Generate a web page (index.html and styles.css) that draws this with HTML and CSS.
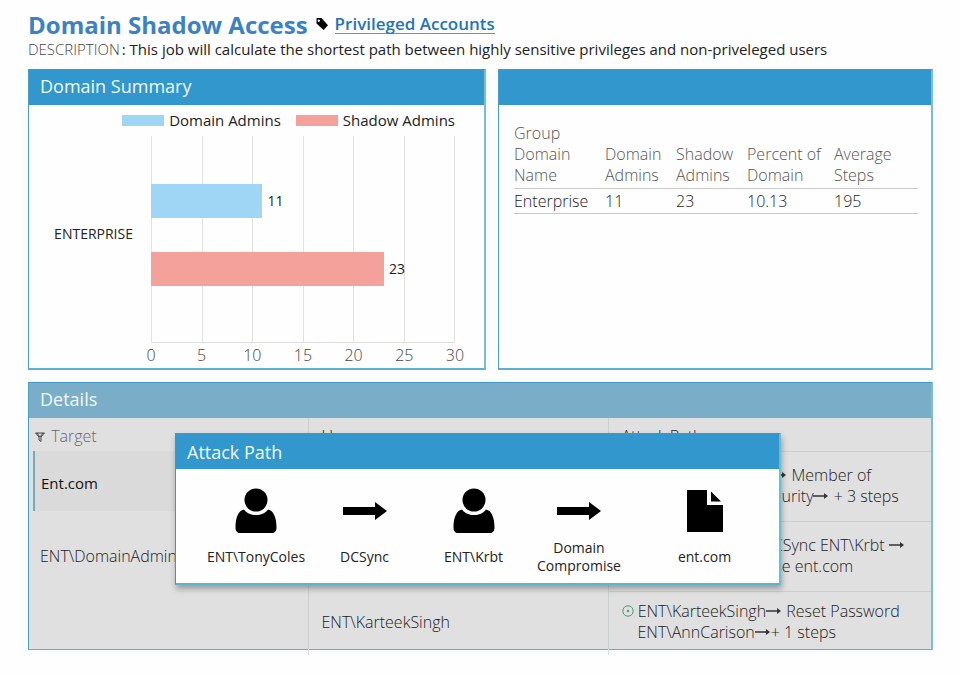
FILE: index.html
```html
<!DOCTYPE html>
<html lang="en">
<head>
    <meta charset="UTF-8">
    <meta name="viewport" content="width=device-width, initial-scale=1.0">
    <title>Domain Shadow Access</title>
    <link rel="stylesheet" href="styles.css">
</head>
<body>
    <svg width="0" height="0" class="sprite">
        <symbol id="person" viewBox="0 0 42 46">
            <path d="M9 21.500C12 25.500 16 27 21 27s9-1.500 12-5.500c5.500 1 8.500 8 8.500 18 0 3.500-1.500 5.500-5 5.500h-31c-3.500 0-5-2-5-5.500 0-10 3-17 8.500-18z"/>
            <circle cx="21" cy="12" r="11.500"/>
        </symbol>
        <symbol id="arrow" viewBox="0 0 46 20">
            <path d="M1 6h32V1l12 9-12 9v-5H1z"/>
        </symbol>
        <symbol id="file" viewBox="0 0 36 42">
            <path d="M0 0h20v15h16v27H0z"/>
            <path d="M24 1.500v10h10z"/>
        </symbol>
        <symbol id="step" viewBox="0 0 16 8">
            <path d="M0 4h12" stroke="currentColor" stroke-width="1.500"/>
            <path d="M11 1l4 3-4 3z" fill="currentColor"/>
        </symbol>
    </svg>

    <header class="page-header">
        <div class="title-row">
            <h1>Domain Shadow Access</h1>
            <svg class="tag-icon" viewBox="0 0 12 12"><path fill-rule="evenodd" d="M1 0h4.500L12 7.200 7.600 12 .5 5.500V.5zM2.800 1.500a1.200 1.200 0 1 0 .01 0z"/></svg>
            <a href="#">Privileged Accounts</a>
        </div>
        <p class="description"><span>DESCRIPTION</span>: This job will calculate the shortest path between highly sensitive privileges and non-priveleged users</p>
    </header>

    <main>
        <div class="top-panels">
            <section class="panel">
                <h2>Domain Summary</h2>
                <div class="chart">
                    <div class="legend">
                        <span><i class="domain"></i>Domain Admins</span>
                        <span><i class="shadow"></i>Shadow Admins</span>
                    </div>
                    <div class="category">ENTERPRISE</div>
                    <div class="grid-lines">
                        <i></i><i></i><i></i><i></i><i></i><i></i>
                    </div>
                    <div class="bars">
                        <div class="bar-row"><div class="bar domain" style="width: 36.667%"></div>11</div>
                        <div class="bar-row"><div class="bar shadow" style="width: 76.667%"></div>23</div>
                    </div>
                    <div class="axis">
                        <span>0</span><span>5</span><span>10</span><span>15</span><span>20</span><span>25</span><span>30</span>
                    </div>
                </div>
            </section>

            <section class="panel">
                <h2></h2>
                <table class="summary">
                    <thead>
                        <tr>
                            <th>Group<br>Domain<br>Name</th>
                            <th>Domain<br>Admins</th>
                            <th>Shadow<br>Admins</th>
                            <th>Percent of<br>Domain</th>
                            <th>Average<br>Steps</th>
                        </tr>
                    </thead>
                    <tbody>
                        <tr>
                            <td>Enterprise</td>
                            <td>11</td>
                            <td>23</td>
                            <td>10.13</td>
                            <td>195</td>
                        </tr>
                    </tbody>
                </table>
            </section>
        </div>

        <section class="panel details">
            <h2>Details</h2>
            <table class="paths">
                <thead>
                    <tr>
                        <th>
                            <svg class="filter-icon" viewBox="0 0 10 10"><path d="M.5 1h9L6 5v4.500L4 8V5zM2 1l3 4 3-4"/></svg>
                            Target
                        </th>
                        <th>User</th>
                        <th>Attack Path</th>
                    </tr>
                </thead>
                <tbody>
                    <tr>
                        <td class="selected"><div>Ent.com</div></td>
                        <td></td>
                        <td>
                            <div class="steps">ENT\RobertBrown <svg class="step"><use href="#step"/></svg> Member of<br>
                            ENT\Operations Security<svg class="step"><use href="#step"/></svg> + 3 steps</div>
                        </td>
                    </tr>
                    <tr>
                        <td>ENT\DomainAdmins</td>
                        <td></td>
                        <td>
                            <div class="steps">ENT\TonyColes<svg class="step"><use href="#step"/></svg>DCSync ENT\Krbt <svg class="step"><use href="#step"/></svg><br>
                            Domain Compromise ent.com</div>
                        </td>
                    </tr>
                    <tr>
                        <td></td>
                        <td>ENT\KarteekSingh</td>
                        <td>
                            <div class="steps">
                                <svg class="target-icon" viewBox="0 0 12 12"><circle cx="6" cy="6" r="5.200"/><circle class="dot" cx="6" cy="6" r="1.200"/></svg>
                                ENT\KarteekSingh<svg class="step"><use href="#step"/></svg> Reset Password<br>
                                ENT\AnnCarison<svg class="step"><use href="#step"/></svg>+ 1 steps
                            </div>
                        </td>
                    </tr>
                </tbody>
            </table>

            <div class="popup" role="dialog" aria-label="Attack Path">
                <h2>Attack Path</h2>
                <ol>
                    <li><svg class="person"><use href="#person"/></svg><span>ENT\TonyColes</span></li>
                    <li><svg class="arrow"><use href="#arrow"/></svg><span>DCSync</span></li>
                    <li><svg class="person"><use href="#person"/></svg><span>ENT\Krbt</span></li>
                    <li><svg class="arrow"><use href="#arrow"/></svg><span>Domain<br>Compromise</span></li>
                    <li><svg class="file"><use href="#file"/></svg><span>ent.com</span></li>
                </ol>
            </div>
        </section>
    </main>
</body>
</html>
```

FILE: styles.css
```css
* {
    box-sizing: border-box;
}
body {
    font-family: 'Open Sans', 'Noto Sans', sans-serif;
    background-color: #fefefe;
    margin: 0;
    padding: 8px 28px 20px;
    color: #222;
    font-size: 15px;
}
h1, h2, p, ol {
    margin: 0;
    padding: 0;
}
.sprite {
    position: absolute;
}

/* Page header */
.title-row {
    display: flex;
    align-items: center;
    height: 32px;
}
h1 {
    color: #3a82c4;
    font-size: 24px;
    font-weight: 700;
}
.tag-icon {
    width: 12px;
    height: 12px;
    margin: 0 7px 0 8px;
}
.title-row a {
    color: #2474b5;
    font-size: 17px;
    font-weight: 600;
    text-decoration: none;
    line-height: 18px;
    border-bottom: 1px solid #6f8fc4;
}
.description {
    font-size: 15px;
    line-height: 18px;
    margin-bottom: 11px;
}
.description span {
    font-weight: 300;
    font-size: 15px;
    margin-right: 2px;
    color: #444;
}

/* Panels */
.top-panels {
    display: grid;
    grid-template-columns: 458fr 435fr;
    gap: 12px;
    margin-bottom: 12px;
}
.panel {
    border: 1px solid;
    border-right-width: 2px;
    border-bottom-width: 2px;
    border-color: #3f98c8 #7dbdd3 #5fb0cf #4a9dc5;
    background-color: #fefefe;
    box-shadow: 0 0 8px rgba(90,150,200,0.08);
}
.panel h2 {
    height: 35px;
    padding-left: 11px;
    background-color: #3197cc;
    color: #f2f9fd;
    font-size: 18px;
    font-weight: 400;
    line-height: 33px;
}

/* Bar chart */
.chart {
    display: grid;
    grid-template-columns: 104px 1fr;
    grid-template-rows: 31px 207px 25px;
    column-gap: 18px;
    padding-right: 29px;
}
.legend {
    grid-column: 1 / 3;
    display: flex;
    justify-content: flex-end;
    gap: 15px;
    line-height: 31px;
    font-size: 15px;
}
.legend i {
    display: inline-block;
    width: 42px;
    height: 11px;
    margin-right: 5px;
}
.domain {
    background-color: #a0d6f5;
}
.shadow {
    background-color: #f4a09b;
}
.category {
    grid-row: 2;
    align-self: center;
    padding-bottom: 12px;
    text-align: right;
    font-size: 14px;
}
.grid-lines, .bars {
    grid-row: 2;
    grid-column: 2;
}
.grid-lines {
    display: flex;
    border-bottom: 1px solid #ddd;
}
.grid-lines i {
    flex: 1;
    border-left: 1px solid #e2e2e2;
}
.grid-lines i:last-child {
    border-right: 1px solid #e2e2e2;
}
.bars {
    display: flex;
    flex-direction: column;
    justify-content: center;
    gap: 34px;
    padding-bottom: 10px;
}
.bar-row {
    display: flex;
    align-items: center;
    gap: 5px;
    font-size: 14px;
    line-height: 34px;
}
.bar {
    height: 34px;
}
.axis {
    grid-column: 2;
    display: flex;
    justify-content: space-between;
    margin: 0 -15px;
    font-size: 16px;
    font-weight: 300;
    color: #444;
    line-height: 24px;
}
.axis span {
    width: 30px;
    text-align: center;
}

/* Tables */
table {
    border-collapse: collapse;
    font-size: 16px;
}
th, td {
    padding: 0;
    font-weight: 300;
    text-align: left;
    color: #222;
}
.summary {
    width: calc(100% - 28px);
    margin: 18px 13px 0 15px;
}
.summary th {
    color: #555;
    line-height: 21px;
    padding-bottom: 2px;
    vertical-align: bottom;
}
.summary th:nth-child(1) {
    width: 91px;
}
.summary th:nth-child(2), .summary th:nth-child(3) {
    width: 71px;
}
.summary th:nth-child(4) {
    width: 87px;
}
.summary tr {
    border-bottom: 1px solid #c9c9c9;
}
.summary td {
    height: 25px;
    line-height: 22px;
}
.details {
    position: relative;
    border-bottom-width: 1px;
    background-color: #e0e0e0;
}
.details > h2 {
    background-color: #7aaec8;
}
.paths {
    width: 100%;
    table-layout: fixed;
}
.paths th:nth-child(1) {
    width: 279px;
    padding-left: 6px;
    color: #667;
}
.paths th:nth-child(2) {
    width: 300px;
}
.paths th {
    height: 33px;
    padding-top: 3px;
}
.paths tbody tr {
    height: 70px;
}
.paths tbody tr:last-child {
    height: 58px;
}
.paths td:nth-child(1) {
    padding-left: 11px;
}
.paths th:nth-child(n+2), .paths td:nth-child(n+2) {
    border-left: 1px solid #cbcfd0;
    padding-left: 13px;
}
.paths td:nth-child(3) {
    border-top: 1px solid #cbcfd0;
}
.paths td.selected {
    padding: 0 0 0 4px;
    vertical-align: top;
}
.selected div {
    height: 60px;
    padding-left: 6px;
    border-left: 2px solid #78a9b8;
    background-color: #dadada;
    color: #111;
    font-size: 15px;
    font-weight: 400;
    line-height: 65px;
}
/* column rules run a little past the panel */
.paths tr:last-child td {
    position: relative;
    padding-top: 3px;
}
.paths tr:last-child td:nth-child(n+2)::after {
    content: "";
    position: absolute;
    top: 100%;
    left: -1px;
    height: 6px;
    border-left: 1px solid #dfe2e3;
}
.steps {
    padding-left: 16px;
    line-height: 21px;
    white-space: nowrap;
}
.filter-icon {
    width: 10px;
    height: 10px;
    margin-right: 2px;
    fill: none;
    stroke: #444;
}
.target-icon {
    width: 12px;
    height: 12px;
    margin-left: -16px;
    fill: none;
    stroke: #4f9a72;
}
.target-icon .dot {
    fill: #4f9a72;
    stroke: none;
}
.step {
    width: 16px;
    height: 8px;
    color: #333;
    vertical-align: 2px;
}

/* Attack path popup */
.popup {
    position: absolute;
    top: 50px;
    left: 146px;
    right: 150px;
    border: 1px solid #3a98c2;
    border-right: 2px solid #6cbcd4;
    border-bottom: 2px solid #5fb4cc;
    background-color: #fefefe;
    box-shadow: 1px 4px 6px rgba(0,0,0,0.3);
}
.popup h2 {
    line-height: 36px;
}
.popup ol {
    display: grid;
    grid-template-columns: 108fr 109fr 109fr 102fr 149fr;
    height: 114px;
    padding-left: 26px;
    list-style: none;
}
.popup li {
    display: grid;
    grid-template-rows: 84px 8px;
    place-items: center;
    text-align: center;
    font-size: 14px;
    line-height: 18px;
}
.person {
    width: 42px;
    height: 46px;
}
.arrow {
    width: 46px;
    height: 20px;
}
.file {
    width: 36px;
    height: 42px;
}
```
